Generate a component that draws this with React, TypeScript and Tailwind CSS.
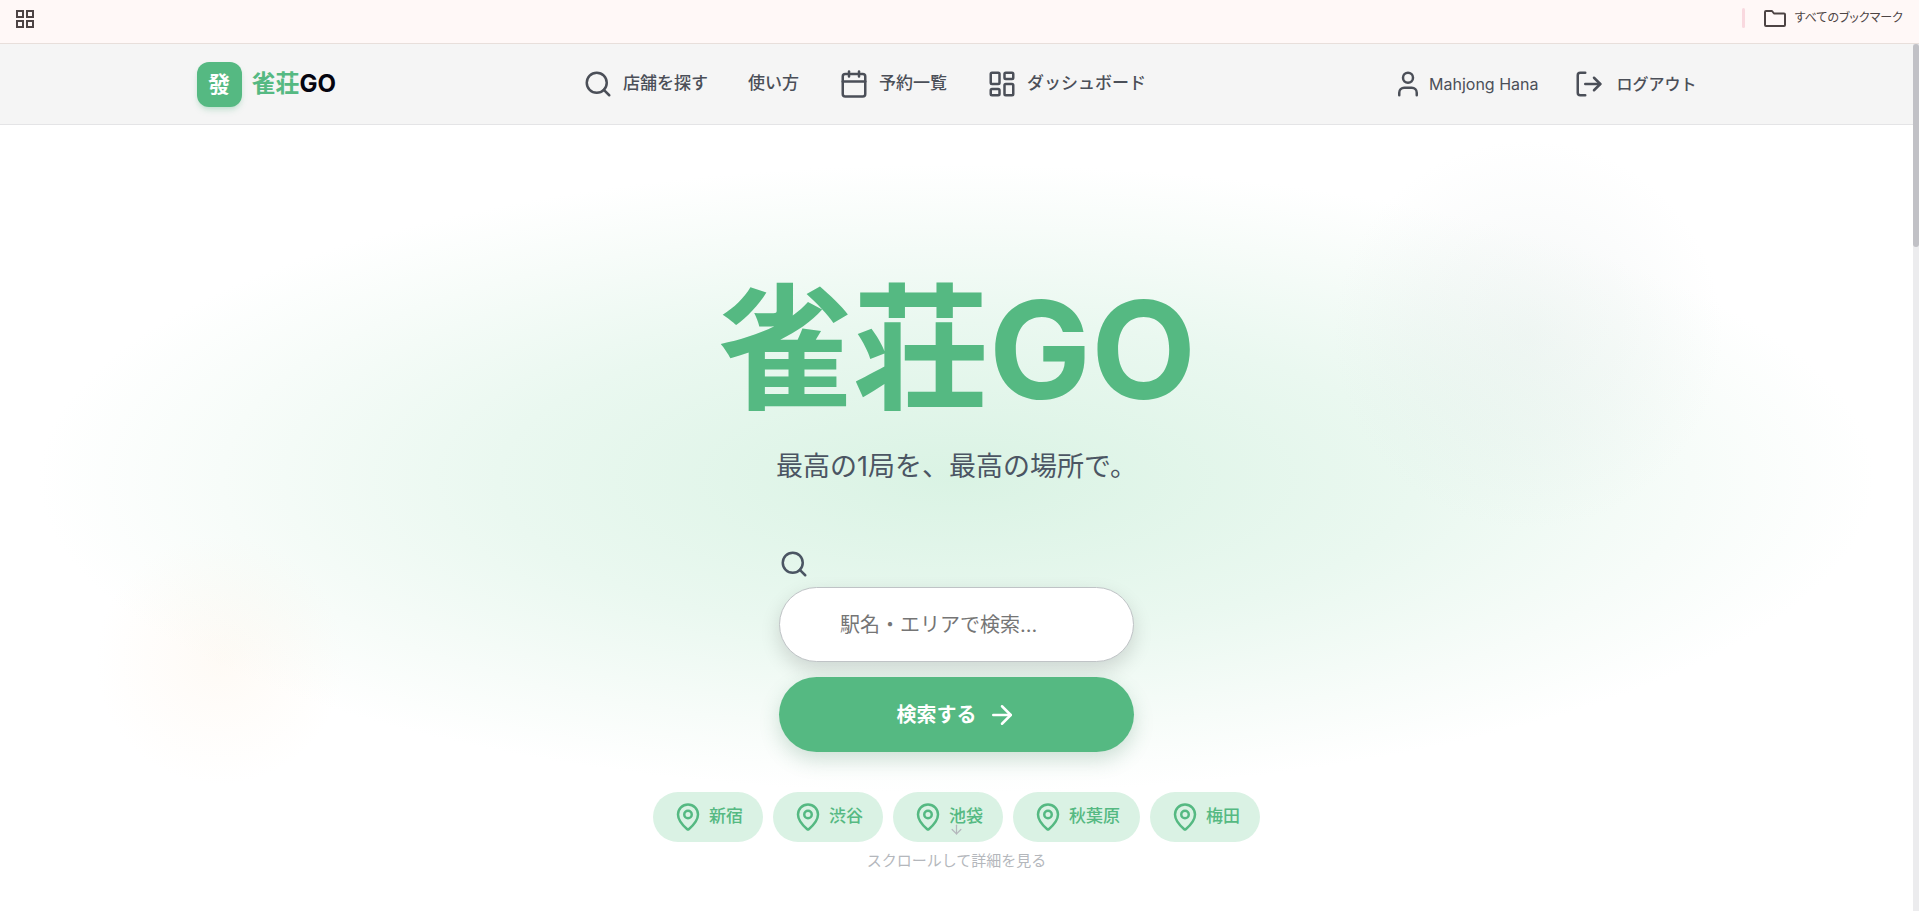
import React from "react";
import { Search, Calendar, LayoutDashboard, User, LogOut, ArrowRight, ArrowDown, MapPin } from "lucide-react";

const areas = ["新宿", "渋谷", "池袋", "秋葉原", "梅田"];

function BookmarkBar() {
  return (
    <div className="flex h-11 items-start justify-between border-b border-[#e8dfdb] bg-[#fff8f7] px-4 text-[#4d4444]">
      <button aria-label="アプリ" className="mt-2.5">
        <svg width="18" height="18" viewBox="0 0 18 18" fill="none" stroke="currentColor" strokeWidth="2">
          <rect x="1" y="1" width="6" height="6" />
          <rect x="11" y="1" width="6" height="6" />
          <rect x="1" y="11" width="6" height="6" />
          <rect x="11" y="11" width="6" height="6" />
        </svg>
      </button>
      <div className="mt-2 flex items-center">
        <span className="h-5 w-[3px] rounded-full bg-[#f9d9df]" />
        <button className="ml-[18px] flex items-center gap-2 text-[12px] leading-5 [font-feature-settings:'palt']">
          <svg width="24" height="20" viewBox="0 0 24 20" fill="none" stroke="currentColor" strokeWidth="2" strokeLinejoin="round">
            <path d="M2 4a1 1 0 0 1 1-1h6l2 2.500h10a1 1 0 0 1 1 1V17a1 1 0 0 1-1 1H3a1 1 0 0 1-1-1z" />
          </svg>
          すべてのブックマーク
        </button>
      </div>
    </div>
  );
}

function Header() {
  return (
    <header className="border-b border-[#e4e4e6] bg-[#f5f5f5]">
      <div className="mx-auto flex h-20 max-w-[1520px] items-center justify-between pr-5 text-[17px] font-medium text-[#4b4f58]">
        <a href="#" className="flex items-center gap-2.5 text-[24px] font-bold text-[#050510]">
          <span className="flex size-[45px] items-center justify-center rounded-xl bg-[#55b982] text-[22px] text-white shadow-md shadow-[#55b982]/25">
            發
          </span>
          <span>
            <span className="text-[#55b982]">雀荘</span>GO
          </span>
        </a>
        <nav className="flex items-center gap-10">
          <a href="#" className="flex items-center gap-2.5"><Search size={30} />店舗を探す</a>
          <a href="#">使い方</a>
          <a href="#" className="flex items-center gap-2.5"><Calendar size={30} />予約一覧</a>
          <a href="#" className="flex items-center gap-2.5"><LayoutDashboard size={30} />ダッシュボード</a>
        </nav>
        <div className="flex items-center gap-9 text-[16px]">
          <a href="#" className="flex items-center gap-1.5 font-normal"><User size={30} />Mahjong Hana</a>
          <button className="flex items-center gap-3"><LogOut size={30} />ログアウト</button>
        </div>
      </div>
    </header>
  );
}

function Hero() {
  return (
    <main className="relative flex flex-1 flex-col items-center overflow-hidden bg-white bg-[radial-gradient(ellipse_48%_40%_at_50%_45%,#daf3e4_0%,#eaf8f0_50%,#f7fcf9_80%,#ffffff_100%)] pt-[140px]">
      <div className="absolute top-[15px] right-[190px] size-[390px] rounded-full bg-[radial-gradient(closest-side,rgba(210,222,220,0.2),rgba(210,222,220,0.12)_50%,rgba(210,222,220,0))]" />
      <div className="absolute top-[410px] left-[95px] size-[250px] rounded-full bg-[radial-gradient(closest-side,rgba(250,225,195,0.16),rgba(250,225,195,0))]" />
      <h1 className="relative text-[136px] leading-[170px] font-bold text-[#55b982]">雀荘GO</h1>
      <p className="relative mt-3 text-[27px] leading-10 text-[#4b5563]">最高の1局を、最高の場所で。</p>
      <form className="relative mt-[62px] flex w-[355px] flex-col" onSubmit={(e) => e.preventDefault()}>
        <label htmlFor="area" aria-label="駅名・エリア" className="text-[#4b5563]"><Search size={30} /></label>
        <input
          id="area"
          type="search"
          placeholder="駅名・エリアで検索..."
          className="mt-2 h-[75px] w-full rounded-full border border-[#bfc3c6] bg-white px-[60px] text-[20px] shadow-[0_8px_20px_rgba(0,0,0,0.14)] placeholder:text-[#757575]"
        />
        <button className="mt-[15px] flex h-[75px] items-center justify-center gap-2.5 rounded-full bg-[#55b982] text-[20px] font-bold text-white shadow-[0_8px_20px_rgba(50,120,80,0.22)]">
          検索する
          <ArrowRight size={30} />
        </button>
      </form>
      <div className="relative mt-10 flex gap-2.5">
        {areas.map((area) => (
          <button key={area} className="flex h-[50px] items-center gap-1.5 rounded-full bg-[#daf2e4] px-5 text-[17px] font-medium text-[#55b982]">
            <MapPin size={30} />
            {area}
          </button>
        ))}
      </div>
      <div className="absolute top-[697px] flex flex-col items-center gap-3 text-[15px] leading-6 text-[#b4b7bc]">
        <ArrowDown size={15} />
        <span>スクロールして詳細を見る</span>
      </div>
    </main>
  );
}

export default function App() {
  return (
    <div lang="ja" className="flex min-h-screen flex-col font-['Inter','Noto_Sans_CJK_JP',sans-serif]">
      <BookmarkBar />
      <div className="flex flex-1">
        <div className="flex min-w-0 flex-1 flex-col">
          <Header />
          <Hero />
        </div>
        <div className="w-1.5 bg-[#ececee]">
          <div className="h-[203px] rounded-full bg-[#c1c1c6]" />
        </div>
      </div>
    </div>
  );
}
